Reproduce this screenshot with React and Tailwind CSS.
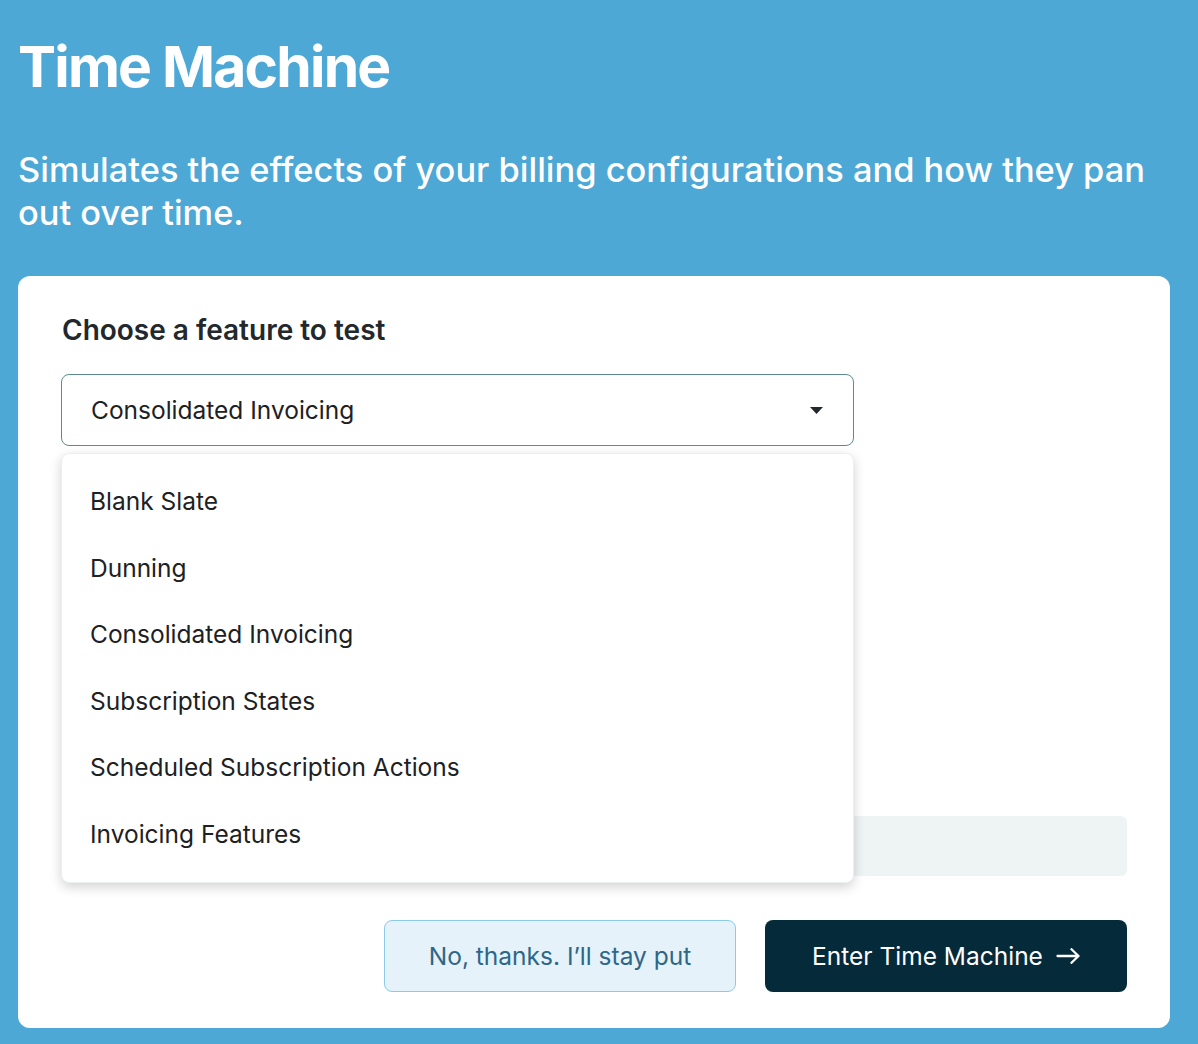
const features = [
    'Blank Slate',
    'Dunning',
    'Consolidated Invoicing',
    'Subscription States',
    'Scheduled Subscription Actions',
    'Invoicing Features',
];

const App = () => {
    return (
        <div className="min-h-[1044px] bg-[#4ea8d6] font-['Inter','Liberation_Sans',sans-serif] pt-[32px] pb-[16px]">
            <div className="pl-[18px] pr-[28px]">
                <h1 className="text-[57px] leading-[70px] font-bold text-white tracking-[-1.8px]">Time Machine</h1>
                <p className="mt-[46px] text-[34.4px] leading-[43px] font-medium text-white">
                    Simulates the effects of your billing configurations and how they pan out over time.
                </p>
            </div>

            <div className="ml-[18px] mr-[28px] mt-[42px] bg-white rounded-xl pt-[37px] pb-[36px] px-[43px]">
                <h2 className="pl-px text-[28px] leading-[34px] font-semibold text-[#23282d]">Choose a feature to test</h2>

                <div className="relative mt-[27px] w-[793px]">
                    <div className="h-[72px] flex items-center justify-between border border-[#5b8b90] rounded-lg pl-[29px] pr-[30px]">
                        <span className="text-[24.5px] text-[#1d2124]">Consolidated Invoicing</span>
                        <svg width="13" height="7" viewBox="0 0 13 7">
                            <path d="M0 0 L13 0 L6.5 7 Z" fill="#23282d" />
                        </svg>
                    </div>

                    {/* open menu */}
                    <ul className="absolute z-10 left-0 top-[79px] w-[793px] bg-white rounded-lg border border-[#eceff1] shadow-[0_4px_12px_rgba(0,0,0,0.18)] py-[14px]">
                        {features.map((f) => (
                            <li key={f} className="h-[66.6px] flex items-center px-[28px] text-[24.5px] text-[#1d2124]">
                                {f}
                            </li>
                        ))}
                    </ul>
                </div>

                {/* content covered by the menu */}
                <div className="h-[370px]"></div>

                <div className="h-[60px] rounded-md bg-[#eef3f4]"></div>

                <div className="mt-[44px] flex justify-end gap-[29px]">
                    <button className="w-[352px] h-[72px] rounded-lg bg-[#e5f2fa] border border-[#8ccbe8] text-[24.5px] text-[#2e6787]">
                        No, thanks. I’ll stay put
                    </button>
                    <button className="w-[362px] h-[72px] rounded-lg bg-[#052a3a] text-[24.5px] text-white flex items-center justify-center gap-[13px]">
                        Enter Time Machine
                        <svg width="24" height="16" viewBox="0 0 24 16" fill="none" stroke="white" strokeWidth="2.3" strokeLinecap="round" strokeLinejoin="round">
                            <path d="M1.5 8 H22.5 M15.5 1.2 L22.5 8 L15.5 14.8" />
                        </svg>
                    </button>
                </div>
            </div>
        </div>
    );
};

export default App;
